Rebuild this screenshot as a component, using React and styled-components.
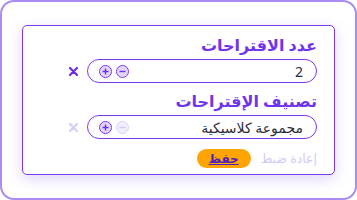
import React from 'react';
import styled, { createGlobalStyle } from 'styled-components';

const Global = createGlobalStyle`
  html, body { margin: 0; padding: 0; background: #fff; }
  body { font-family: "Noto Sans", "DejaVu Sans", sans-serif; }
`;

const Frame = styled.div`
  box-sizing: border-box;
  width: 357px;
  height: 200px;
  border: 2px solid #a98bf3;
  border-radius: 14px;
  padding: 23px 20px;
  background: #fff;
`;

const Card = styled.div`
  box-sizing: border-box;
  height: 150px;
  border: 1px solid #7c3aed;
  border-radius: 5px;
  background: #fff;
  box-shadow: 0 4px 14px rgba(110, 60, 220, 0.22);
  direction: rtl;
  padding: 6px 17px 0 0;
  display: flex;
  flex-direction: column;
`;

const Title = styled.div`
  color: #7035ea;
  font-size: 16px;
  font-weight: 600;
  line-height: 26px;
  height: 27px;
`;

const Row = styled.div`
  display: flex;
  align-items: center;
  gap: 9px;
  margin-bottom: ${p => p.$last ? '10px' : '5px'};
`;

const Pill = styled.div`
  box-sizing: border-box;
  width: 230px;
  height: 24px;
  border: 1px solid #7c3aed;
  border-radius: 12px;
  display: flex;
  align-items: center;
  justify-content: space-between;
  padding: 0 13px 0 11px;
`;

const Value = styled.span`
  color: #2b2b3a;
  font-size: 14px;
`;

const Steppers = styled.div`
  display: flex;
  direction: ltr;
  gap: 4px;
`;

const Step = styled.span`
  box-sizing: border-box;
  width: 13px;
  height: 13px;
  border-radius: 50%;
  border: 1px solid ${p => p.$off ? '#ddd0fb' : '#7c3aed'};
  background: ${p => p.$off ? '#f3eefe' : '#e2d6fd'};
  display: flex;
  align-items: center;
  justify-content: center;
  color: ${p => p.$off ? '#d6c8fa' : '#6c2ee6'};
`;

const Clear = styled.span`
  display: flex;
  color: ${p => p.$off ? '#d9ccfb' : '#6c2ee6'};
`;

const Actions = styled.div`
  display: flex;
  align-items: center;
  gap: 10px;
`;

const Reset = styled.span`
  color: #d6c9f7;
  font-size: 12.5px;
`;

const Save = styled.span`
  width: 54px;
  height: 19px;
  border-radius: 10px;
  background: #ffa400;
  color: #4f1fb8;
  font-size: 12px;
  font-weight: 600;
  text-decoration: underline;
  display: flex;
  align-items: center;
  justify-content: center;
`;

const Plus = () => (
  <svg width="7" height="7" viewBox="0 0 7 7">
    <path d="M3.5 0.5v6M0.5 3.5h6" stroke="currentColor" strokeWidth="1.4" />
  </svg>
);

const Minus = () => (
  <svg width="7" height="7" viewBox="0 0 7 7">
    <path d="M0.5 3.5h6" stroke="currentColor" strokeWidth="1.4" />
  </svg>
);

const Cross = () => (
  <svg width="9" height="9" viewBox="0 0 9 9">
    <path d="M1 1l7 7M8 1l-7 7" stroke="currentColor" strokeWidth="2.2" strokeLinecap="round" />
  </svg>
);

const Field = ({ label, value, minusOff, clearOff, last }) => (
  <>
    <Title>{label}</Title>
    <Row $last={last}>
      <Pill>
        <Value>{value}</Value>
        <Steppers>
          <Step><Plus /></Step>
          <Step $off={minusOff}><Minus /></Step>
        </Steppers>
      </Pill>
      <Clear $off={clearOff}><Cross /></Clear>
    </Row>
  </>
);

export default function App() {
  return (
    <>
      <Global />
      <Frame>
        <Card>
          <Field label="عدد الاقتراحات" value="2" />
          <Field label="تصنيف الإقتراحات" value="مجموعة كلاسيكية" minusOff clearOff last />
          <Actions>
            <Reset>إعادة ضبط</Reset>
            <Save>حفظ</Save>
          </Actions>
        </Card>
      </Frame>
    </>
  );
}
